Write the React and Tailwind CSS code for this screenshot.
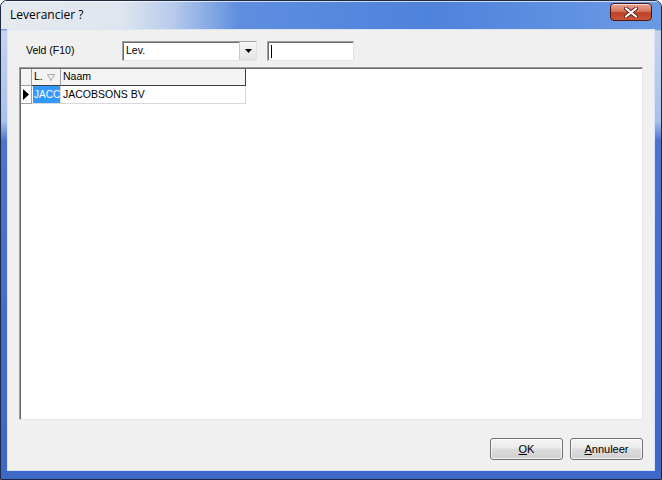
import React from 'react';

const ui = { fontFamily: '"Liberation Sans", Arial, sans-serif' };

function CloseButton() {
  return (
    <div className="absolute right-[9px] top-[2px] w-[42px] h-[18px] rounded-[4px] border border-[#4a1810] bg-[linear-gradient(180deg,#e6a493_0%,#d7765f_45%,#bf3f26_55%,#c9583d_100%)] shadow-[inset_0_1px_0_rgba(255,255,255,0.6)] flex items-center justify-center">
      <svg width="14" height="11" viewBox="0 0 14 11">
        <path d="M2 1.5 L12 9.5 M12 1.5 L2 9.5" stroke="#5b2418" strokeWidth="4" strokeLinecap="round" />
        <path d="M2 1.5 L12 9.5 M12 1.5 L2 9.5" stroke="#ffffff" strokeWidth="2.2" strokeLinecap="round" />
      </svg>
    </div>
  );
}

function Button({ hot, rest }) {
  return (
    <button className="w-[73px] h-[22px] rounded-[3px] border border-[#707070] bg-[linear-gradient(180deg,#f4f4f4_0%,#ebebeb_45%,#dddddd_50%,#cfcfcf_100%)] shadow-[inset_0_0_0_1px_rgba(255,255,255,0.8)] text-[11px] text-black">
      <span className="underline">{hot}</span>
      {rest}
    </button>
  );
}

export default function App() {
  return (
    <div className="w-[662px] h-[480px] bg-white" style={ui}>
      <div className="relative w-full h-full flex flex-col rounded-t-[7px] border border-[#1c2a44] bg-[linear-gradient(180deg,#5a88dc_0px,#5a88dc_28px,#c4d4ee_30px,#a9c1ea_120px,#4a74cf_140px,#3d68c8_100%)] overflow-hidden">
        {/* Title bar */}
        <div className="h-[28px] flex items-center pl-[9px] bg-[linear-gradient(90deg,#e6eaef_0%,#dfe6ef_18%,#b7cbeb_26%,#5f8edf_36%,#4f82dc_65%,#6b9ae4_100%)] shadow-[inset_0_1px_0_rgba(255,255,255,0.7)]">
          <span className="text-[12px] text-black pb-[1px]" style={{ fontFamily: '"Open Sans", "Liberation Sans", sans-serif' }}>
            Leverancier ?
          </span>
          <CloseButton />
        </div>

        {/* Client area */}
        <div className="flex-1 mx-[6px] border border-[#dbe4f2] bg-[#f0f0f0] flex flex-col px-[11px] pt-[11px] pb-[10px]">
          <div className="flex items-center h-[20px]">
            <div className="w-[103px] pl-[7px] text-[10.5px] text-black">Veld (F10)</div>
            <div className="w-[135px] h-[20px] flex bg-white border border-t-[#a0a0a0] border-l-[#a0a0a0] border-b-[#e3e3e3] border-r-[#e3e3e3] shadow-[inset_1px_1px_0_#696969]">
              <div className="flex-1 pl-[3px] flex items-center text-[10.5px]">Lev.</div>
              <div className="w-[17px] h-full border-l border-[#c8c8c8] bg-[linear-gradient(180deg,#f6f6f6,#e4e4e4)] flex items-center justify-center">
                <svg width="7" height="4" viewBox="0 0 7 4"><path d="M0 0 H7 L3.5 4 Z" fill="#000" /></svg>
              </div>
            </div>
            <div className="ml-[10px] w-[87px] h-[20px] bg-white border border-t-[#a0a0a0] border-l-[#a0a0a0] border-b-[#e3e3e3] border-r-[#e3e3e3] shadow-[inset_1px_1px_0_#696969] flex items-center pl-[3px]">
              <div className="w-px h-[13px] bg-black" />
            </div>
          </div>

          {/* Grid */}
          <div className="mt-[6px] flex-1 bg-white border border-t-[#9a9a9a] border-l-[#9a9a9a] border-b-[#e8e8e8] border-r-[#e8e8e8] shadow-[inset_1px_1px_0_#696969] pl-[1px] pt-[1px]">
            <div className="flex h-[17px] text-[10.5px]">
              <div className="w-[11px] h-full bg-[#f4f4f4] border-r border-b border-[#a0a0a0]" />
              <div className="w-[29px] h-full bg-[#f4f4f4] border-r border-b border-[#a0a0a0] border-b-[#404040] flex items-center pl-[2px]">
                <span>L.</span>
                <svg className="ml-[4px]" width="8" height="7" viewBox="0 0 8 7"><path d="M0.5 0.5 H7.5 L4 6.5 Z" fill="none" stroke="#a8a8a8" /></svg>
              </div>
              <div className="w-[185px] h-full bg-[#f4f4f4] border-r border-b border-[#404040] flex items-center pl-[2px]">Naam</div>
            </div>
            <div className="flex h-[18px] text-[10.5px]">
              <div className="w-[11px] h-full bg-white border-r border-b border-[#a0a0a0] flex items-center justify-center">
                <svg width="6" height="11" viewBox="0 0 6 11"><path d="M0 0 L6 5.5 L0 11 Z" fill="#000" /></svg>
              </div>
              <div className="w-[29px] h-full border-r border-b border-[#d8d8d8] bg-white flex items-center pl-px">
                <div className="h-full w-full overflow-hidden bg-[#3399ff] text-white text-[10px] flex items-center pl-px">JACC</div>
              </div>
              <div className="w-[185px] h-full border-r border-b border-[#d8d8d8] flex items-center pl-[2px]">JACOBSONS BV</div>
            </div>
          </div>

          <div className="mt-[18px] flex justify-end gap-[7px]">
            <Button hot="O" rest="K" />
            <Button hot="A" rest="nnuleer" />
          </div>
        </div>
        <div className="h-[8px]" />
      </div>
    </div>
  );
}
